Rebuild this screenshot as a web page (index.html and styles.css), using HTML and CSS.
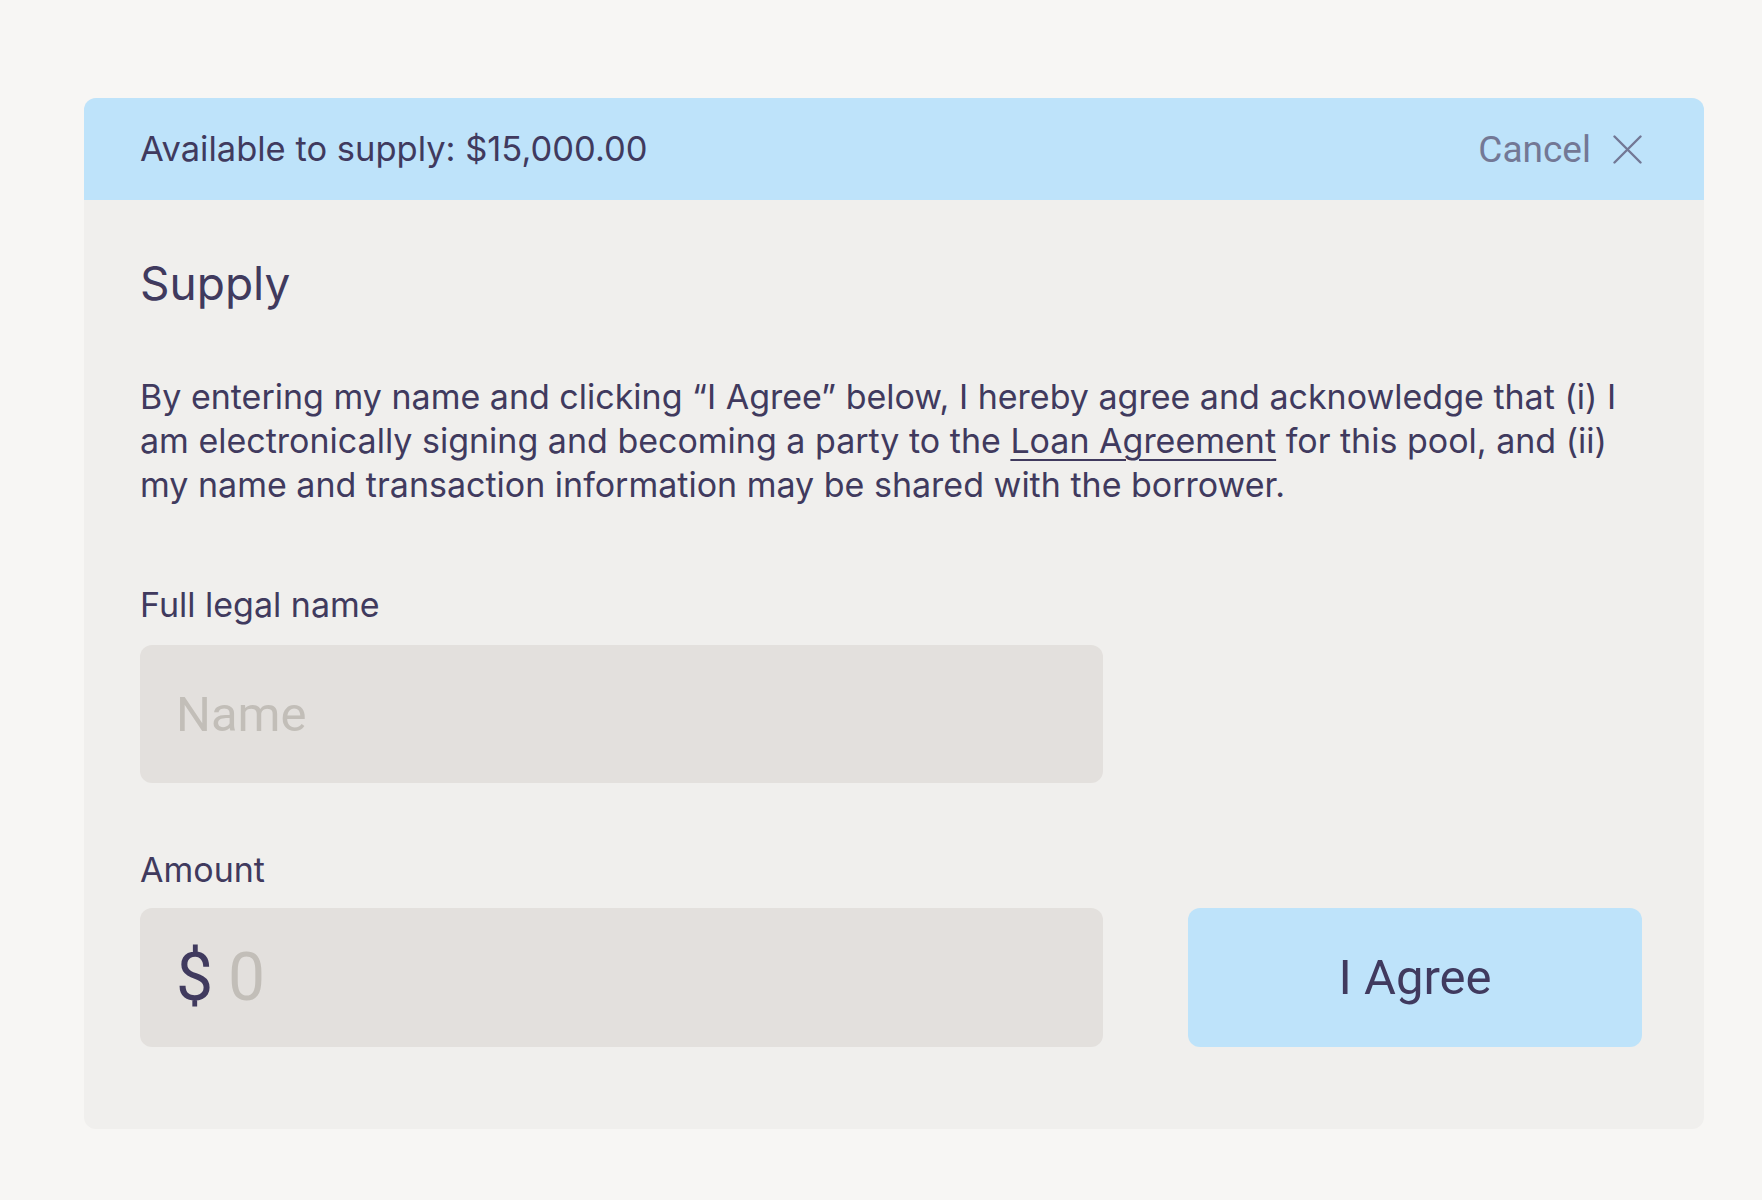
FILE: index.html
```html
<!DOCTYPE html>
<html lang="en">
<head>
<meta charset="utf-8">
<title>Supply</title>
<link rel="stylesheet" href="styles.css">
</head>
<body>
<div class="card">
  <div class="card-header">
    <div class="available">Available to supply: $15,000.00</div>
    <button class="cancel" type="button">
      <span>Cancel</span>
      <svg class="cancel-icon" width="29" height="29" viewBox="0 0 29 29" aria-hidden="true">
        <path d="M1.5 1.5 L27.5 27.5 M27.5 1.5 L1.5 27.5" stroke="#737895" stroke-width="2.4" stroke-linecap="round" fill="none"/>
      </svg>
    </button>
  </div>
  <div class="card-body">
    <h2 class="title">Supply</h2>
    <p class="terms">By entering my name and clicking “I Agree” below, I hereby agree and acknowledge that (i) I am electronically signing and becoming a party to the <a class="terms-link" href="#">Loan Agreement</a> for this pool, and (ii) my name and transaction information may be shared with the borrower.</p>
    <label class="field-label" for="name">Full legal name</label>
    <div class="row">
      <input class="text-input" id="name" type="text" placeholder="Name">
    </div>
    <label class="field-label amount-label" for="amount">Amount</label>
    <div class="row amount-row">
      <div class="amount-input">
        <span class="currency">$</span>
        <input class="amount-field" id="amount" type="text" placeholder="0">
      </div>
      <button class="agree" type="button">I Agree</button>
    </div>
  </div>
</div>
</body>
</html>
```

FILE: styles.css
```css
* {
  box-sizing: border-box;
}

body {
  margin: 0;
  background: #f7f6f4;
  font-family: Inter, "Noto Sans", sans-serif;
  color: #403a5e;
}

.card {
  margin: 98px 0 0 84px;
  width: 1620px;
  background: #f0efed;
  border-radius: 12px;
  overflow: hidden;
}

.card-header {
  height: 102px;
  background: #bee3fa;
  display: flex;
  align-items: center;
  justify-content: space-between;
  padding: 0 62px 0 56px;
}

.available {
  font-size: 34.5px;
  line-height: 40px;
}

.cancel {
  display: flex;
  align-items: center;
  gap: 22px;
  border: 0;
  background: transparent;
  padding: 0;
  font-family: Roboto, "Liberation Sans", sans-serif;
  font-size: 37px;
  color: #737895;
  cursor: pointer;
}

.cancel-icon {
  display: block;
}

.card-body {
  padding: 55px 62px 82px 56px;
}

.title {
  margin: 0;
  font-size: 46px;
  line-height: 56px;
  font-weight: 400;
}

.terms {
  margin: 64px 0 0;
  font-size: 34px;
  line-height: 44px;
}

.terms-link {
  color: inherit;
  text-decoration: underline;
  text-decoration-thickness: 2px;
  text-underline-offset: 6px;
}

.field-label {
  display: block;
  margin-top: 78px;
  font-size: 34px;
  line-height: 40px;
}

.amount-label {
  margin-top: 67px;
}

.row {
  display: flex;
  justify-content: space-between;
  margin-top: 20px;
}

.amount-row {
  margin-top: 18px;
}

.text-input {
  width: 963px;
  height: 138px;
  border: 0;
  border-radius: 12px;
  background: #e3e0dd;
  padding: 0 36px;
  font-family: Roboto, "Liberation Sans", sans-serif;
  font-size: 49px;
  color: #403a5e;
  outline: none;
}

.text-input::placeholder {
  color: #c2beb8;
}

.amount-input {
  width: 963px;
  height: 139px;
  border-radius: 12px;
  background: #e3e0dd;
  display: flex;
  align-items: center;
  padding: 0 36px;
  font-family: Roboto, "Liberation Sans", sans-serif;
  font-size: 66px;
}

.currency {
  color: #403a5e;
  margin-right: 15px;
}

.amount-field {
  flex: 1;
  border: 0;
  background: transparent;
  padding: 0;
  font-family: inherit;
  font-size: 66px;
  color: #403a5e;
  outline: none;
  min-width: 0;
}

.amount-field::placeholder {
  color: #c2beb8;
}

.agree {
  width: 454px;
  height: 139px;
  border: 0;
  border-radius: 12px;
  background: #bee3fa;
  font-family: Roboto, "Liberation Sans", sans-serif;
  font-size: 49px;
  color: #403a5e;
  cursor: pointer;
}
```
